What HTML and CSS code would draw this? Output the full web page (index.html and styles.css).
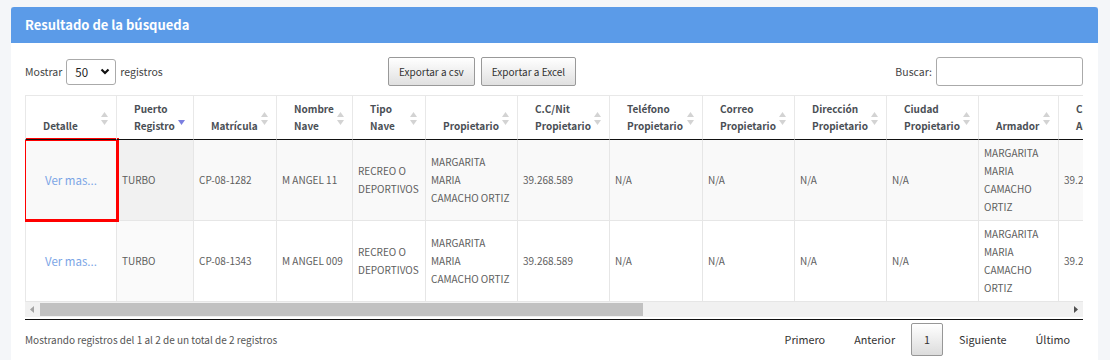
FILE: index.html
```html
<!DOCTYPE html>
<html lang="es">
<head>
<meta charset="utf-8">
<title>Resultado de la búsqueda</title>
<link rel="stylesheet" href="styles.css">
</head>
<body>
<div class="card">
  <div class="card-header"><h3 class="card-title">Resultado de la búsqueda</h3></div>
  <div class="card-body">
    <div class="toolbar">
      <div class="length">
        <span>Mostrar</span>
        <div class="select"><span>50</span>
          <svg class="chev" width="10" height="7" viewBox="0 0 10 7"><polyline points="1.5,1.5 5,5 8.5,1.5" fill="none" stroke="#111" stroke-width="2.2"/></svg>
        </div>
        <span>registros</span>
      </div>
      <div class="buttons">
        <button class="btn">Exportar a csv</button>
        <button class="btn">Exportar a Excel</button>
      </div>
      <div class="filter">
        <span>Buscar:</span>
        <div class="input"></div>
      </div>
    </div>

    <div class="scroll">
      <table class="grid">
        <thead>
          <tr>
            <th class="w92 first">Detalle<i class="sort"><svg width="7" height="13" viewBox="0 0 7 13"><polygon points="0,5 3.5,0 7,5" fill="#d3d3d3"/><polygon points="0,8 7,8 3.5,13" fill="#d3d3d3"/></svg></i></th>
            <th class="w77">Puerto<br>Registro<i class="sort"><svg width="7" height="13" viewBox="0 0 7 13"><polygon points="0,8 7,8 3.5,13" fill="#7b7fe0"/></svg></i></th>
            <th class="w83">Matrícula<i class="sort"><svg width="7" height="13" viewBox="0 0 7 13"><polygon points="0,5 3.5,0 7,5" fill="#d3d3d3"/><polygon points="0,8 7,8 3.5,13" fill="#d3d3d3"/></svg></i></th>
            <th class="w76">Nombre<br>Nave<i class="sort"><svg width="7" height="13" viewBox="0 0 7 13"><polygon points="0,5 3.5,0 7,5" fill="#d3d3d3"/><polygon points="0,8 7,8 3.5,13" fill="#d3d3d3"/></svg></i></th>
            <th class="w73">Tipo<br>Nave<i class="sort"><svg width="7" height="13" viewBox="0 0 7 13"><polygon points="0,5 3.5,0 7,5" fill="#d3d3d3"/><polygon points="0,8 7,8 3.5,13" fill="#d3d3d3"/></svg></i></th>
            <th class="w92">Propietario<i class="sort"><svg width="7" height="13" viewBox="0 0 7 13"><polygon points="0,5 3.5,0 7,5" fill="#d3d3d3"/><polygon points="0,8 7,8 3.5,13" fill="#d3d3d3"/></svg></i></th>
            <th class="w92">C.C/Nit<br>Propietario<i class="sort"><svg width="7" height="13" viewBox="0 0 7 13"><polygon points="0,5 3.5,0 7,5" fill="#d3d3d3"/><polygon points="0,8 7,8 3.5,13" fill="#d3d3d3"/></svg></i></th>
            <th class="w93">Teléfono<br>Propietario<i class="sort"><svg width="7" height="13" viewBox="0 0 7 13"><polygon points="0,5 3.5,0 7,5" fill="#d3d3d3"/><polygon points="0,8 7,8 3.5,13" fill="#d3d3d3"/></svg></i></th>
            <th class="w92">Correo<br>Propietario<i class="sort"><svg width="7" height="13" viewBox="0 0 7 13"><polygon points="0,5 3.5,0 7,5" fill="#d3d3d3"/><polygon points="0,8 7,8 3.5,13" fill="#d3d3d3"/></svg></i></th>
            <th class="w92">Dirección<br>Propietario<i class="sort"><svg width="7" height="13" viewBox="0 0 7 13"><polygon points="0,5 3.5,0 7,5" fill="#d3d3d3"/><polygon points="0,8 7,8 3.5,13" fill="#d3d3d3"/></svg></i></th>
            <th class="w92">Ciudad<br>Propietario<i class="sort"><svg width="7" height="13" viewBox="0 0 7 13"><polygon points="0,5 3.5,0 7,5" fill="#d3d3d3"/><polygon points="0,8 7,8 3.5,13" fill="#d3d3d3"/></svg></i></th>
            <th class="w80">Armador<i class="sort"><svg width="7" height="13" viewBox="0 0 7 13"><polygon points="0,5 3.5,0 7,5" fill="#d3d3d3"/><polygon points="0,8 7,8 3.5,13" fill="#d3d3d3"/></svg></i></th>
            <th class="w92">C.C/Nit<br>Armador<i class="sort"><svg width="7" height="13" viewBox="0 0 7 13"><polygon points="0,5 3.5,0 7,5" fill="#d3d3d3"/><polygon points="0,8 7,8 3.5,13" fill="#d3d3d3"/></svg></i></th>
            <th class="w92">Teléfono<br>Armador<i class="sort"><svg width="7" height="13" viewBox="0 0 7 13"><polygon points="0,5 3.5,0 7,5" fill="#d3d3d3"/><polygon points="0,8 7,8 3.5,13" fill="#d3d3d3"/></svg></i></th>
            <th class="w92">Correo<br>Armador<i class="sort"><svg width="7" height="13" viewBox="0 0 7 13"><polygon points="0,5 3.5,0 7,5" fill="#d3d3d3"/><polygon points="0,8 7,8 3.5,13" fill="#d3d3d3"/></svg></i></th>
            <th class="w92">Dirección<br>Armador<i class="sort"><svg width="7" height="13" viewBox="0 0 7 13"><polygon points="0,5 3.5,0 7,5" fill="#d3d3d3"/><polygon points="0,8 7,8 3.5,13" fill="#d3d3d3"/></svg></i></th>
            <th class="w92">Ciudad<br>Armador<i class="sort"><svg width="7" height="13" viewBox="0 0 7 13"><polygon points="0,5 3.5,0 7,5" fill="#d3d3d3"/><polygon points="0,8 7,8 3.5,13" fill="#d3d3d3"/></svg></i></th>
            <th class="w92">Estado<i class="sort"><svg width="7" height="13" viewBox="0 0 7 13"><polygon points="0,5 3.5,0 7,5" fill="#d3d3d3"/><polygon points="0,8 7,8 3.5,13" fill="#d3d3d3"/></svg></i></th>
          </tr>
        </thead>
        <tbody>
          <tr class="odd">
            <td class="first detail marked"><a href="#">Ver mas...</a></td>
            <td class="sorted">TURBO</td>
            <td>CP-08-1282</td>
            <td>M ANGEL 11</td>
            <td>RECREO O<br>DEPORTIVOS</td>
            <td>MARGARITA<br>MARIA<br>CAMACHO ORTIZ</td>
            <td>39.268.589</td>
            <td>N/A</td>
            <td>N/A</td>
            <td>N/A</td>
            <td>N/A</td>
            <td>MARGARITA<br>MARIA<br>CAMACHO<br>ORTIZ</td>
            <td>39.268.589</td>
            <td>N/A</td>
            <td>N/A</td>
            <td>N/A</td>
            <td>N/A</td>
            <td>ACTIVA</td>
          </tr>
          <tr class="even">
            <td class="first detail"><a href="#">Ver mas...</a></td>
            <td class="sorted">TURBO</td>
            <td>CP-08-1343</td>
            <td>M ANGEL 009</td>
            <td>RECREO O<br>DEPORTIVOS</td>
            <td>MARGARITA<br>MARIA<br>CAMACHO ORTIZ</td>
            <td>39.268.589</td>
            <td>N/A</td>
            <td>N/A</td>
            <td>N/A</td>
            <td>N/A</td>
            <td>MARGARITA<br>MARIA<br>CAMACHO<br>ORTIZ</td>
            <td>39.268.589</td>
            <td>N/A</td>
            <td>N/A</td>
            <td>N/A</td>
            <td>N/A</td>
            <td>ACTIVA</td>
          </tr>
        </tbody>
      </table>
    </div>

    <div class="hscroll">
      <div class="arrow">
        <svg width="5" height="7" viewBox="0 0 5 7"><polygon points="4,0 4,7 0,3.5" fill="#a3a3a3"/></svg>
      </div>
      <div class="track"><div class="thumb"></div></div>
      <div class="arrow">
        <svg width="5" height="7" viewBox="0 0 5 7"><polygon points="1,0 1,7 5,3.5" fill="#505050"/></svg>
      </div>
    </div>

    <div class="footer">
      <div class="info">Mostrando registros del 1 al 2 de un total de 2 registros</div>
      <div class="paginate">
        <a class="pbtn" href="#">Primero</a>
        <a class="pbtn" href="#">Anterior</a>
        <a class="pbtn current" href="#">1</a>
        <a class="pbtn" href="#">Siguiente</a>
        <a class="pbtn" href="#">Último</a>
      </div>
    </div>
  </div>
</div>
</body>
</html>
```

FILE: styles.css
```css
* { box-sizing: border-box; }

html, body { background: #f4f6f9; }

body {
  margin: 7px 12px 0 11px;
  font-family: "Noto Sans CJK SC", Lato, sans-serif;
  font-size: 10px;
  line-height: 18px;
  color: #555;
}

.card {
  background: #fff;
  border-radius: 3px;
  box-shadow: 0 0 1px rgba(0,0,0,.125), 0 1px 3px rgba(0,0,0,.2);
  height: 400px;
}

.card-header {
  background: #5b9be8;
  height: 36px;
  padding: 0 14px;
  display: flex;
  align-items: center;
  border-radius: 3px 3px 0 0;
}

.card-title {
  margin: 0;
  color: #fff;
  font-size: 13px;
  line-height: 20px;
  font-weight: 700;
}

.card-body {
  padding: 14px 15px 0 14px;
}

/* toolbar */
.toolbar {
  display: grid;
  grid-template-columns: 363px auto 1fr;
  align-items: center;
  height: 29px;
  margin-bottom: 9px;
}

.length {
  display: flex;
  align-items: center;
  gap: 4px;
  color: #444;
  font-size: 10.5px;
}

.select {
  width: 50px;
  height: 26px;
  border: 1px solid #aaa;
  border-radius: 3px;
  display: flex;
  align-items: center;
  justify-content: space-between;
  padding: 0 5px 0 8px;
  color: #222;
  font-size: 11.5px;
}

.buttons { display: flex; gap: 6px; }

.btn {
  font-family: inherit;
  font-size: 10px;
  color: #333;
  height: 29px;
  padding: 0 10px;
  border: 1px solid #999;
  border-radius: 2px;
  background: linear-gradient(to bottom, #fff 0%, #e0e0e0 100%);
}

.filter {
  justify-self: end;
  display: flex;
  align-items: center;
  gap: 4px;
  color: #444;
  font-size: 10.5px;
}

.input {
  width: 147px;
  height: 29px;
  border: 1px solid #aaa;
  border-radius: 3px;
  background: #fff;
}

/* table */
.scroll {
  width: 1058px;
  overflow: hidden;
}

.grid {
  border-collapse: separate;
  border-spacing: 0;
  table-layout: fixed;
  width: 1586px;
}

.grid th {
  position: relative;
  text-align: left;
  vertical-align: bottom;
  font-weight: 700;
  color: #4a4f55;
  line-height: 17px;
  padding: 4px 18px 5px 17px;
  border-top: 1px solid #e8e8e8;
  border-right: 1px solid #e8e8e8;
  border-bottom: 1px solid #111;
  white-space: nowrap;
  overflow: hidden;
}

.grid th.first, .grid td.first { border-left: 1px solid #e8e8e8; }

.w92 { width: 92px; }
.w77 { width: 77px; }
.w83 { width: 83px; }
.w76 { width: 76px; }
.w73 { width: 73px; }
.w93 { width: 93px; }
.w80 { width: 80px; }

.sort {
  position: absolute;
  right: 8px;
  top: 50%;
  margin-top: -6px;
  display: block;
  width: 7px;
  height: 13px;
  line-height: 0;
}

.grid td {
  padding: 4px 5px;
  line-height: 18px;
  vertical-align: middle;
  color: #5e5e5e;
  border-right: 1px solid #e6e6e6;
  white-space: nowrap;
  overflow: hidden;
}

.grid tr.odd td { background: #f9f9f9; }
.grid tr.odd td.sorted { background: #f1f1f1; }
.grid tr.even td { background: #fff; border-top: 1px solid #e6e6e6; border-bottom: 1px solid #e6e6e6; }
.grid tr.even td.sorted { background: #fafafa; }

.grid td.detail { text-align: center; }
.grid td.detail a { color: #7ba5e6; text-decoration: none; font-size: 11.5px; }

.grid td.marked {
  outline: 3px solid #f00;
  outline-offset: -1px;
}

/* fake horizontal scrollbar */
.hscroll {
  display: flex;
  height: 18px;
  padding-bottom: 2px;
  border-bottom: 1px solid #111;
}

.arrow {
  width: 15px;
  height: 15px;
  background: #f1f1f1;
  display: flex;
  align-items: center;
  justify-content: center;
}

.track {
  flex: 1;
  height: 15px;
  background: #f1f1f1;
  padding: 1px 0;
}

.thumb {
  width: 603px;
  height: 13px;
  background: #c1c1c1;
}

/* footer */
.footer {
  display: flex;
  justify-content: space-between;
  align-items: center;
  padding-top: 3px;
}

.info { color: #555; }

.paginate { display: flex; font-size: 10.8px; }

.pbtn {
  display: block;
  padding: 7px 12px;
  line-height: 17px;
  margin-left: 3px;
  border: 1px solid transparent;
  border-radius: 2px;
  color: #333;
  text-decoration: none;
}

.pbtn.current {
  border-color: #979797;
  background: linear-gradient(to bottom, #fff 0%, #dcdcdc 100%);
}
```
